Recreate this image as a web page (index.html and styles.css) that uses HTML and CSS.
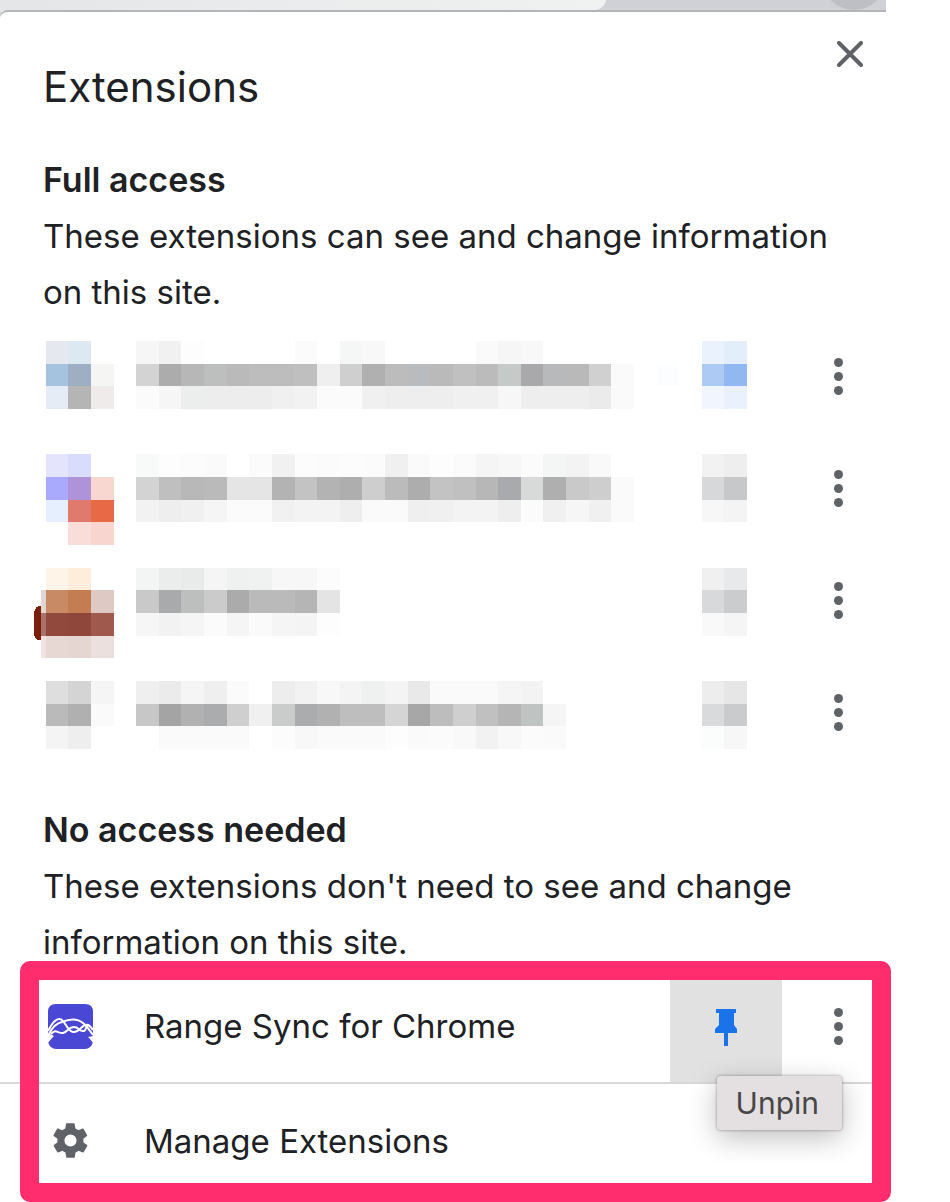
FILE: index.html
```
<!DOCTYPE html>
<html lang="en">

<head>
    <meta charset="utf-8" />
    <meta name="viewport" content="width=device-width, initial-scale=1" />
    <title>Extensions</title>
    <link rel="stylesheet" href="styles.css">
</head>

<body>
    <div class="toolbar">
        <div class="omnibox"></div>
        <div class="avatar"></div>
    </div>

    <main class="popup">
        <header class="header">
            <h1>Extensions</h1>
            <button class="close" aria-label="Close">
                <svg width="26" height="26" viewBox="0 0 26 26"><path d="M2 2L24 24M24 2L2 24" /></svg>
            </button>
        </header>

        <section class="section">
            <h2>Full access</h2>
            <p>These extensions can see and change information on this site.</p>
        </section>
        <div class="list">
            <div class="row"><button class="menu" aria-label="More options"><i></i><i></i><i></i></button></div>
            <div class="row"><button class="menu" aria-label="More options"><i></i><i></i><i></i></button></div>
            <div class="row"><button class="menu" aria-label="More options"><i></i><i></i><i></i></button></div>
            <div class="row"><button class="menu" aria-label="More options"><i></i><i></i><i></i></button></div>
            <svg class="mosaic" id="mosaic" viewBox="-1 0 32 18" preserveAspectRatio="none" aria-hidden="true"></svg>
        </div>

        <section class="section">
            <h2>No access needed</h2>
            <p>These extensions don't need to see and change information on this site.</p>
        </section>
        <div class="highlighted">
            <div class="row">
                <button class="item">
                    <svg class="icon" viewBox="0 0 45 45">
                        <path d="M8 0H37Q45 0 45 8V38Q43 45 37 45H8Q2 45 0 38V8Q0 0 8 0Z" fill="#4a47d5" />
                        <path d="M0 29V39C2 36 4 34 6 32ZM45 32V39C43 36 42 35 40 33Z" fill="#fff" />
                        <g fill="none" stroke="#fff" stroke-width="2">
                            <path d="M0 27C4 19 8 14 12 15C17 16 19 27 25 28C31 29 32 23 37 21C41 20 43 23 45 26" />
                            <path d="M1 30C5 22 9 19 14 18C21 15 29 14 35 19C40 23 42 27 45 31" />
                            <path d="M3 30C8 24 10 30 15 29C20 28 20 23 26 23C31 23 31 28 36 27C39 26 37 21 41 21" />
                        </g>
                    </svg>
                    Range Sync for Chrome
                </button>
                <button class="pin" aria-label="Unpin" aria-describedby="tip">
                    <svg width="24" height="37" viewBox="0 0 24 37"><path d="M2 0H22V4H20V16L23 20V24H14V37H10V24H1V20L5 16V4H2Z" fill="#1a73e8" /></svg>
                </button>
                <button class="menu" aria-label="More options"><i></i><i></i><i></i></button>
                <div class="tooltip" id="tip" role="tooltip">Unpin</div>
            </div>
            <div class="row manage">
                <button class="item">
                    <svg class="icon" viewBox="-1 -1 26 26"><path fill="#5f6368" d="M19.4 13c0-.3.1-.6.1-1s0-.7-.1-1l2.1-1.6c.2-.2.2-.4.1-.6l-2-3.5c-.1-.2-.4-.3-.6-.2l-2.5 1c-.5-.4-1.1-.7-1.7-1l-.4-2.6c0-.3-.2-.5-.5-.5h-4c-.3 0-.5.2-.5.4L9 5.1c-.6.3-1.2.6-1.7 1l-2.5-1c-.2-.1-.5 0-.6.2l-2 3.5c-.1.2-.1.5.1.6L4.5 11c0 .3-.1.6-.1 1s0 .7.1 1l-2.1 1.6c-.2.2-.2.4-.1.6l2 3.5c.1.2.4.3.6.2l2.5-1c.5.4 1.1.7 1.7 1l.4 2.6c0 .3.2.5.5.5h4c.3 0 .5-.2.5-.4l.4-2.7c.6-.3 1.2-.6 1.7-1l2.5 1c.2.1.5 0 .6-.2l2-3.5c.1-.2.1-.5-.1-.6L19.4 13zM12 15.5a3.5 3.5 0 1 1 0-7 3.5 3.5 0 0 1 0 7z" /></svg>
                    Manage Extensions
                </button>
            </div>
        </div>
    </main>

    <script src="script.js"></script>
</body>

</html>
```
FILE: styles.css
```
* {
    box-sizing: border-box;
}

body {
    margin: 0;
    padding-bottom: 5px;
    background: #fff;
    color: #202124;
    font-family: Inter, "Liberation Sans", sans-serif;
    font-size: 33px;
    line-height: 56px;
}

button {
    border: 0;
    padding: 0;
    background: none;
    color: inherit;
    font: inherit;
}

h1,
h2,
p {
    margin: 0;
}

.toolbar {
    display: flex;
    justify-content: space-between;
    height: 16px;
    margin-right: 64px;
    overflow: hidden;
    background: #d0d1d6;
}

.omnibox {
    width: 606px;
    height: 12px;
    background: linear-gradient(90deg, #e4e6e7, #f0f2f2);
    border-bottom-right-radius: 20px 12px;
}

.avatar {
    width: 64px;
    height: 64px;
    margin-top: -54px;
    border-radius: 50%;
    background: #bebfc4;
}

.popup {
    position: relative;
    margin-top: -6px;
    margin-right: 64px;
    background: #fff;
    border-top: 2px solid #b4b5b8;
    border-top-left-radius: 8px;
}

.header {
    display: flex;
    justify-content: space-between;
    align-items: flex-start;
    height: 140px;
    padding: 22px 16px 0 43px;
}

h1 {
    margin-top: 25px;
    font-size: 42px;
    font-weight: 400;
}

.close {
    display: flex;
    align-items: center;
    justify-content: center;
    width: 40px;
    height: 40px;
}

.close path {
    stroke: #5f6368;
    stroke-width: 4;
    stroke-linecap: round;
}

.section {
    padding: 0 40px 0 43px;
}

h2 {
    font-size: 34px;
    font-weight: 600;
}

.list {
    position: relative;
    margin-bottom: 34px;
}

.row {
    position: relative;
    display: flex;
    justify-content: flex-end;
    height: 112px;
}

.menu {
    display: flex;
    flex-direction: column;
    align-items: center;
    justify-content: center;
    gap: 5px;
    width: 96px;
    margin-left: 8px;
}

.menu i {
    width: 9px;
    height: 9px;
    border-radius: 50%;
    background: #5f6368;
}

/* blurred-out extension names */
.mosaic {
    position: absolute;
    left: 23px;
    top: 21px;
    width: 724px;
    height: 408px;
    shape-rendering: crispEdges;
}

/* pink frame drawn round the rows */
.highlighted {
    position: relative;
}

.highlighted::after {
    content: "";
    position: absolute;
    top: -9px;
    left: 20px;
    right: -5px;
    bottom: -5px;
    border: 19px solid #ff2d6d;
    border-radius: 10px;
    pointer-events: none;
}

.item {
    display: flex;
    flex: 1;
    align-items: center;
    gap: 51px;
    padding-left: 48px;
    text-align: left;
}

.icon {
    width: 45px;
    height: 45px;
}

.pin {
    display: flex;
    align-items: center;
    justify-content: center;
    width: 112px;
    padding-top: 2px;
    background: #e1e1e1;
}

.manage {
    height: 115px;
    border-top: 2px solid #d8d8d8;
}

.tooltip {
    position: absolute;
    top: 106px;
    right: 44px;
    z-index: 1;
    padding: 0 23px 0 19px;
    background: #e4dfe1;
    color: #474747;
    font-size: 30px;
    line-height: 54px;
    border-radius: 3px;
    box-shadow: 0 0 3px rgba(0, 0, 0, .4), 0 8px 28px rgba(0, 0, 0, .25);
}
```
FILE: script.js
```
// [row, first column, colours] on a grid of square cells
const cells = [
    [0, 0, "e5e9ef dde9f2"],
    [0, 4, "f6f6f6 f1f1f1 fdfdfd"],
    [0, 11, "fbfbfb ffffff f5f7f6 f8f8f8"],
    [0, 19, "fafafa f6f6f6 f8f8f8"],
    [0, 29, "eaf2fd e3eefb"],
    [1, 0, "a5c3de 9eafc3 f5f5f3"],
    [1, 4, "d3d3d3 acacac b7b7b7 bcbfbe bababa bdbdbd bdbdbd bfbfbf efefef cfcfcf b0b0b0 bcbcbc b9bcbe bababa c0c0c0 bbbbbb c5c9c8 a9a9ab b7b9ba b9b9b9 d0d0d0 fafafa"],
    [1, 27, "fcfdfe"],
    [1, 29, "adcaf5 92b8f2"],
    [2, 0, "e6ecf5 b5b5b5 eeebea"],
    [2, 4, "fafbfa f6f6f6 eceeed ededed ededed ededed f0f0f0 f2f2f2 fbfbfb fbfbfb f0f0f0 eeeeee eeeeee eeeeee f0f0f0 f0f0f0 f7f7f7 eeeeee eeeeee eeeeee ebebeb fafafa"],
    [2, 29, "f1f5fd eaf1fc"],
    [5, 0, "e4e4fc dadcfd"],
    [5, 4, "f8faf9 fdfdfd fcfcfc fafafa ffffff fbfbfb f1f1f1 fcfcfc fbfbfb fcfcfc fbfbfb f0f0f0 fafafa fdfdfd fbfbfb f5f5f5 f7f7f7 fbfbfb f4f6f6 f3f3f3 f9f9f9"],
    [5, 29, "f2f2f2 eeeeee"],
    [6, 0, "a9a9fd af93d9 f9d7d1"],
    [6, 4, "d3d3d3 bfbfbf b8b8b8 bababa e5e5e5 e5e5e5 b3b3b3 c3c3c3 b3b3b3 aeaeae cecece bbbbbb adadad c3c3c3 c0c0c0 b7b7b7 a8aaad d7dad9 afafaf c9c9c9 cecece fafafa"],
    [6, 29, "d7d8d9 c7c8ca"],
    [7, 0, "e5effe e07a6e e86946"],
    [7, 4, "f2f2f2 eeeeee f0f0f0 f5f5f5 fbfbfb fbfbfb f1f1f1 f3f3f3 f3f3f3 eeeeee fafafa fafafa efefef f0f0f0 f3f3f3 f3f3f3 eeeeee fbfbfb f0f0f0 f6f6f6 f0f0f0 fafafa"],
    [7, 29, "f7f7f7 f4f4f4"],
    [8, 1, "f8ddd8 f9d5d0"],
    [10, 0, "fff4e8 ffeddb"],
    [10, 4, "f3f4f4 ebedec e9eaea f5f5f5 eff1f0 f0f1f1 f7f7f7 f7f7f7 fcfcfc"],
    [10, 29, "f0f0f1 e8e9ea"],
    [11, 0, "c78a65 c47d52 dfc9c5"],
    [11, 4, "c9c9c9 a8aaac bcbfbd cbcbcb ababab bababa bababa b5b5b5 e4e4e4"],
    [11, 29, "d8d9da caccce"],
    [12, 0, "91493e 8f463b 9f5a4d"],
    [12, 4, "f6f6f6 f2f2f2 f5f5f5 fbfbfb f5f5f5 fafafa f5f5f5 f4f4f4 fdfdfd"],
    [12, 29, "f9f9f9 f5f5f5"],
    [13, 0, "e7d8d4 e5d6d2 ebe0de"],
    [15, 0, "dedede d4d4d4 f5f5f5"],
    [15, 4, "efefef ebebeb f5f5f5 efefef fbfbfb ffffff ededed f2f2f2 f8f8f8 f4f4f4 eff1f0 f4f4f4 e9e9e9 fafafa fafafa fafafa f5f5f5 f3f3f3"],
    [15, 29, "ededed e6e6e6"],
    [16, 0, "bababa b0b0b0 fafafa"],
    [16, 4, "c7c7c7 a4a4a4 b1b1b1 aaacad cfcfcf f0f0f0 cacccb aaacad b1b1b1 bebebe bebebe d5d5d5 a7a7a7 bdbdbd cfcfcf c0c0c0 b5b5b5 bfc3c2 f5f5f5"],
    [16, 29, "d8dadb cacbcd"],
    [17, 0, "f4f4f4 eeeeee"],
    [17, 5, "fafafa fafafa fafafa fafafa ffffff fcfcfc f8f8f8 fafafa fafafa fafafa fdfdfd fafafa fbfbfb f9f9f9 f2f2f2 f8f8f8 fafbfa fafafa"],
    [17, 29, "fbfcfc f7f7f7"]
];

const mosaic = document.getElementById("mosaic");

function addRect(x, y, w, h, color, rx) {
    const rect = document.createElementNS("http://www.w3.org/2000/svg", "rect");
    rect.setAttribute("x", x);
    rect.setAttribute("y", y);
    rect.setAttribute("width", w);
    rect.setAttribute("height", h);
    rect.setAttribute("fill", color);
    if (rx) rect.setAttribute("rx", rx);
    mosaic.appendChild(rect);
}

// corner of the third icon that sticks out on the left
addRect(-0.5, 11.7, 0.6, 1.5, "#7a1f0a", 0.25);
addRect(-0.2, 11, 0.2, 1, "#e0d6d2");
addRect(-0.2, 12, 0.2, 1, "#a8736a");
addRect(-0.2, 13, 0.2, 1, "#efe4e1");

cells.forEach(([row, col, colors]) => {
    colors.split(" ").forEach((color, i) => addRect(col + i, row, 1, 1, "#" + color));
});
```
